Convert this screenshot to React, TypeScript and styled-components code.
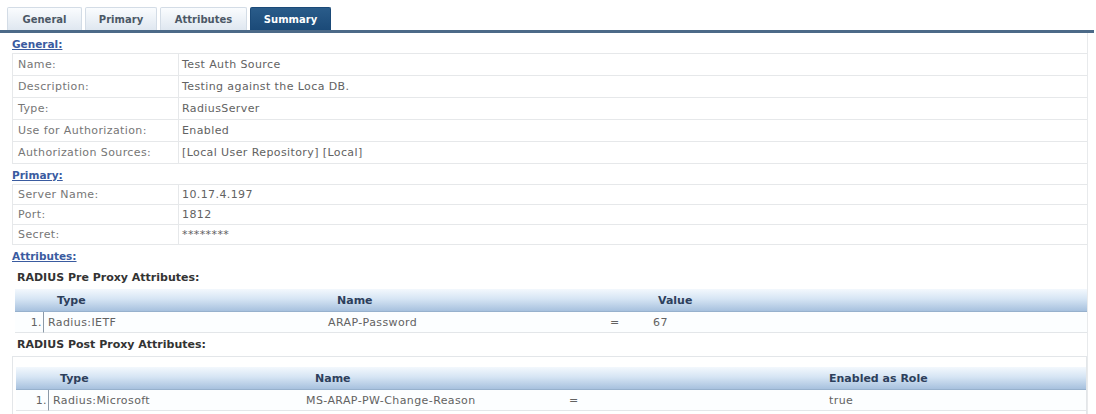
import React from "react";
import styled, { createGlobalStyle } from "styled-components";

const GlobalStyle = createGlobalStyle`
  body {
    margin: 0;
    background: #fff;
    font-family: "DejaVu Sans", Verdana, sans-serif;
    color: #555;
  }
`;

type Tab = { label: string; width: number; active?: boolean };

const tabs: Tab[] = [
  { label: "General", width: 75 },
  { label: "Primary", width: 72 },
  { label: "Attributes", width: 87 },
  { label: "Summary", width: 81, active: true },
];

const general = [
  ["Name:", "Test Auth Source"],
  ["Description:", "Testing against the Loca DB."],
  ["Type:", "RadiusServer"],
  ["Use for Authorization:", "Enabled"],
  ["Authorization Sources:", "[Local User Repository] [Local]"],
];

const primary = [
  ["Server Name:", "10.17.4.197"],
  ["Port:", "1812"],
  ["Secret:", "********"],
];

export default function App() {
  return (
    <Page>
      <GlobalStyle />
      <TabBar>
        {tabs.map((t) => (
          <TabButton key={t.label} active={t.active} width={t.width}>
            {t.label}
          </TabButton>
        ))}
      </TabBar>

      <Panel>
        <SectionTitle>General:</SectionTitle>
        <KeyValueTable>
          {general.map(([k, v]) => (
            <KvRow key={k} height={22}>
              <KvLabel>{k}</KvLabel>
              <KvValue>{v}</KvValue>
            </KvRow>
          ))}
        </KeyValueTable>

        <SectionTitle>Primary:</SectionTitle>
        <KeyValueTable>
          {primary.map(([k, v]) => (
            <KvRow key={k} height={20}>
              <KvLabel>{k}</KvLabel>
              <KvValue>{v}</KvValue>
            </KvRow>
          ))}
        </KeyValueTable>

        <SectionTitle>Attributes:</SectionTitle>
        <SubTitle height={24}>RADIUS Pre Proxy Attributes:</SubTitle>
        <AttrTable cols="29px 280px 276px 49px 1fr">
          <HeadRow>
            <HeadCell />
            <HeadCell>Type</HeadCell>
            <HeadCell>Name</HeadCell>
            <HeadCell />
            <HeadCell pad={9}>Value</HeadCell>
          </HeadRow>
          <BodyRow>
            <NumCell>1.</NumCell>
            <Cell>Radius:IETF</Cell>
            <Cell>ARAP-Password</Cell>
            <Cell pad={10}>=</Cell>
            <Cell>67</Cell>
          </BodyRow>
        </AttrTable>

        <SubTitle height={23}>RADIUS Post Proxy Attributes:</SubTitle>
        <AttrBox>
          <AttrTable cols="33px 253px 254px 269px 1fr">
            <HeadRow>
              <HeadCell />
              <HeadCell pad={11}>Type</HeadCell>
              <HeadCell>Name</HeadCell>
              <HeadCell />
              <HeadCell pad={4}>Enabled as Role</HeadCell>
            </HeadRow>
            <BodyRow>
              <NumCell>1.</NumCell>
              <Cell>Radius:Microsoft</Cell>
              <Cell>MS-ARAP-PW-Change-Reason</Cell>
              <Cell pad={13}>=</Cell>
              <Cell>true</Cell>
            </BodyRow>
          </AttrTable>
        </AttrBox>
      </Panel>
    </Page>
  );
}

const Page = styled.div`
  width: 1096px;
  height: 414px;
  overflow: hidden;
  padding-top: 7px;
  box-sizing: border-box;
`;

const TabBar = styled.div`
  display: flex;
  gap: 3px;
  padding-left: 7px;
  height: 23px;
  border-bottom: 3px solid #4c6a88;
  margin-right: 2px;
`;

const TabButton = styled.div<{ active?: boolean; width: number }>`
  display: flex;
  align-items: center;
  justify-content: center;
  width: ${({ width }) => width}px;
  box-sizing: border-box;
  font-size: 10px;
  font-weight: bold;
  color: ${({ active }) => (active ? "#fff" : "#4b5866")};
  background: ${({ active }) =>
    active
      ? "linear-gradient(#2a5c8a, #1b4a78)"
      : "linear-gradient(#fafcfe, #dfe7f0)"};
  border: 1px solid ${({ active }) => (active ? "#1b4a78" : "#d3dce6")};
  border-bottom: none;
  border-radius: 2px 2px 0 0;
`;

const Panel = styled.div`
  margin: 0 8px 0 12px;
  border-right: 1px solid #e8eaec;
`;

const SectionTitle = styled.div`
  height: 20px;
  display: flex;
  align-items: center;
  padding-top: 2px;
  box-sizing: border-box;
  font-size: 10.5px;
  font-weight: bold;
  color: #3a5ba0;
  text-decoration: underline;
`;

const KeyValueTable = styled.div`
  border-left: 1px solid #e6e8ea;
  border-top: 1px solid #e6e8ea;
`;

const KvRow = styled.div<{ height: number }>`
  display: grid;
  grid-template-columns: 166px 1fr;
  height: ${({ height }) => height}px;
  border-bottom: 1px solid #e6e8ea;
  box-sizing: border-box;
`;

const KvLabel = styled.div`
  display: flex;
  align-items: center;
  padding-left: 5px;
  font-size: 11px;
  letter-spacing: 0.4px;
  color: #767676;
  border-right: 1px solid #e6e8ea;
`;

const KvValue = styled.div`
  display: flex;
  align-items: center;
  padding-left: 3px;
  font-size: 11px;
  letter-spacing: 0.4px;
  color: #626262;
`;

const SubTitle = styled.div<{ height: number }>`
  height: ${({ height }) => height}px;
  display: flex;
  align-items: center;
  padding-left: 5px;
  font-size: 11px;
  font-weight: bold;
  color: #333;
`;

const AttrTable = styled.div<{ cols: string }>`
  display: grid;
  grid-template-columns: ${({ cols }) => cols};
  margin-left: 3px;
`;

const HeadRow = styled.div`
  display: contents;
`;

const HeadCell = styled.div<{ pad?: number }>`
  height: 22px;
  display: flex;
  align-items: center;
  padding-left: ${({ pad }) => pad ?? 13}px;
  font-size: 11px;
  font-weight: bold;
  color: #2d3f5c;
  background: linear-gradient(#f3f8fd 0%, #d6e5f4 45%, #a7c1de 100%);
  border-bottom: 1px solid #97b1cd;
`;

const BodyRow = styled.div`
  display: contents;
`;

const Cell = styled.div<{ pad?: number }>`
  height: 20px;
  display: flex;
  align-items: center;
  padding-left: ${({ pad }) => pad ?? 4}px;
  font-size: 11px;
  letter-spacing: 0.4px;
  color: #626262;
  background: #fcfeff;
  border-bottom: 1px solid #e3e6e9;
`;

const NumCell = styled(Cell)`
  justify-content: flex-end;
  padding-left: 0;
  padding-right: 1px;
  border-right: 1px solid #8c9aa8;
`;

const AttrBox = styled.div`
  border: 1px solid #e3e6e9;
  padding: 10px 0 4px 0;
`;
